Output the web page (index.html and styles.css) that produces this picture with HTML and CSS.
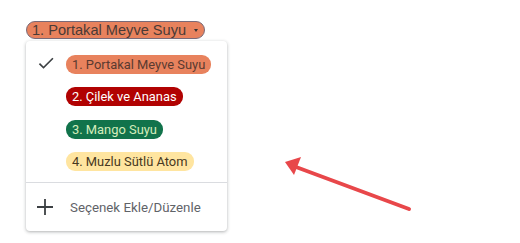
FILE: index.html
```html
<!DOCTYPE html>
<html lang="tr">
<head>
    <meta charset="UTF-8">
    <title>Seçenek</title>
    <link rel="stylesheet" href="styles.css">
</head>
<body>
    <div class="field">
        <div class="select-chip">
            <span>1. Portakal Meyve Suyu</span>
            <span class="caret"></span>
        </div>

        <div class="menu">
            <ul class="options">
                <li class="option">
                    <svg class="check" width="20" height="20" viewBox="0 0 24 24"><path d="M9 16.17L4.83 12l-1.42 1.41L9 19 21 7l-1.41-1.41z" fill="#3c4043"/></svg>
                    <span class="chip orange">1. Portakal Meyve Suyu</span>
                </li>
                <li class="option">
                    <span class="chip red">2. Çilek ve Ananas</span>
                </li>
                <li class="option">
                    <span class="chip green">3. Mango Suyu</span>
                </li>
                <li class="option">
                    <span class="chip yellow">4. Muzlu Sütlü Atom</span>
                </li>
            </ul>
            <div class="add-row">
                <svg class="plus" width="16" height="16" viewBox="0 0 16 16"><path d="M8 0v16M0 8h16" stroke="#3c4043" stroke-width="1.8"/></svg>
                <span>Seçenek Ekle/Düzenle</span>
            </div>
        </div>
    </div>

    <!-- ok işareti -->
    <svg class="arrow" width="140" height="60" viewBox="0 0 140 60">
        <line x1="127" y1="51" x2="14" y2="9" stroke="#e8474a" stroke-width="4" stroke-linecap="round"/>
        <polygon points="3,4 19,-1 12,17" fill="#e8474a"/>
    </svg>
</body>
</html>
```

FILE: styles.css
```css
body {
    margin: 0;
    background: #fff;
    font-family: Roboto, Arial, sans-serif;
    position: relative;
    width: 520px;
    height: 243px;
    overflow: hidden;
}

.field {
    padding: 20px 0 0 26px;
}

.select-chip {
    display: inline-flex;
    align-items: center;
    height: 16px;
    padding: 0 6px 0 5px;
    background: #e8825d;
    border: 1px solid #7a6a78;
    border-radius: 9px;
    font-family: Arial, "Liberation Sans", sans-serif;
    font-size: 14.6px;
    color: #4a3a36;
    gap: 8px;
}

.caret {
    width: 0;
    height: 0;
    border-left: 2px solid transparent;
    border-right: 2px solid transparent;
    border-top: 3px solid #333;
    margin-top: 1px;
}

.menu {
    margin-top: 2px;
    width: 201px;
    background: #fff;
    border-radius: 4px;
    box-shadow: 0 1px 3px rgba(60, 64, 67, 0.3), 0 1px 4px rgba(60, 64, 67, 0.12);
    padding-top: 7px;
    padding-bottom: 8px;
}

.options {
    list-style: none;
    margin: 0;
    padding: 0 0 4px 0;
    border-bottom: 1px solid #dadce0;
}

.option {
    display: flex;
    align-items: center;
    height: 32.5px;
    padding-left: 40px;
    position: relative;
}

.check {
    position: absolute;
    left: 10px;
    top: 5px;
}

.chip {
    display: inline-block;
    height: 19px;
    line-height: 19px;
    padding: 0 6px;
    border-radius: 9px;
    font-size: 12.9px;
}

.orange {
    background: #e8825d;
    color: #5a3a30;
}

.red {
    background: #b10202;
    color: #fff;
}

.green {
    background: #11734b;
    color: #d4edbc;
}

.yellow {
    background: #ffe5a0;
    color: #473821;
}

.add-row {
    display: flex;
    align-items: center;
    height: 32px;
    margin-top: 8px;
    padding-left: 11px;
    gap: 17px;
    font-size: 13.3px;
    color: #5f6368;
}

.arrow {
    position: absolute;
    left: 282px;
    top: 158px;
    overflow: visible;
}
```
